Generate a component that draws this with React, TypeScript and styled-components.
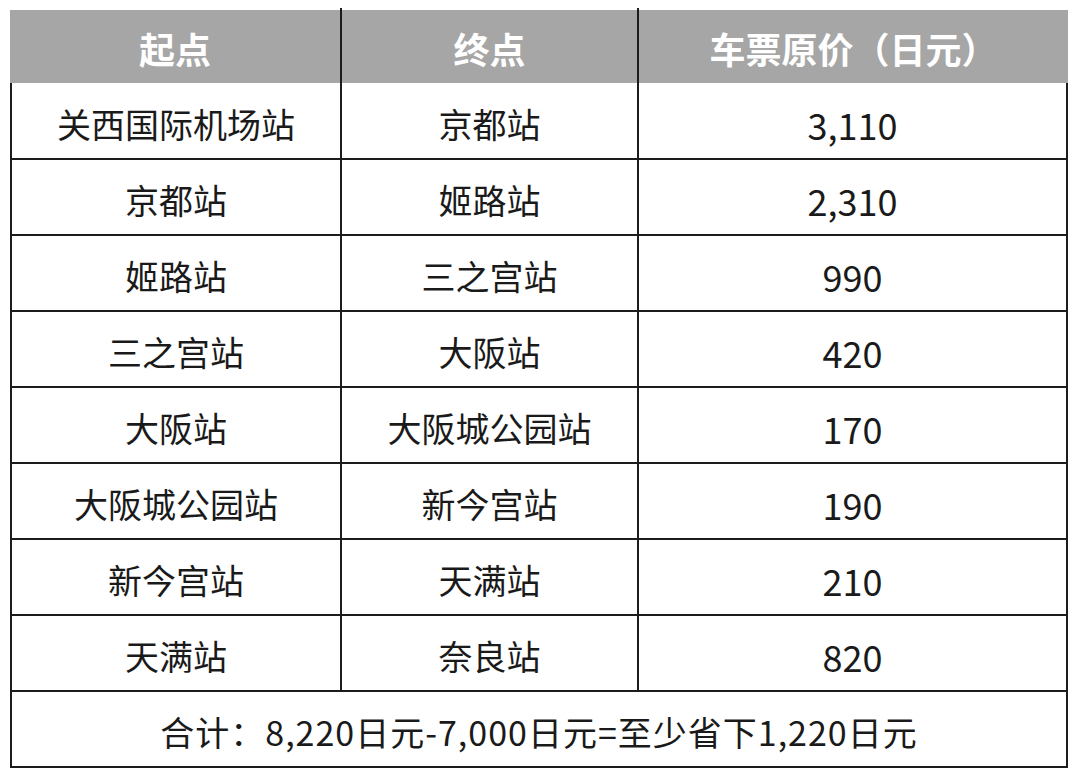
import React from "react";
import styled, { createGlobalStyle } from "styled-components";

const Global = createGlobalStyle`
  html, body { margin: 0; padding: 0; background: #ffffff; }
  body { font-family: "Noto Sans CJK SC", "Noto Sans", sans-serif; }
`;

const Page = styled.div`
  padding: 10px 0 0 10px;
`;

const Table = styled.div`
  width: 1058px;
  display: flex;
  flex-direction: column;
`;

const Header = styled.div`
  display: grid;
  grid-template-columns: 330px 297px 1fr;
  height: 73px;
  background: #a6a6a6;
`;

const HeaderCell = styled.div<{ $divider?: boolean }>`
  position: relative;
  display: flex;
  align-items: center;
  justify-content: center;
  color: #ffffff;
  font-size: 36px;
  font-weight: 700;
  line-height: 1;
  padding-top: 2px;
  box-sizing: border-box;
  border-left: ${(p) => (p.$divider ? "2px solid #1c1c1c" : "none")};
  ${(p) =>
    p.$divider
      ? `&::before {
    content: "";
    position: absolute;
    left: -2px;
    top: -2px;
    width: 2px;
    height: 2px;
    background: #1c1c1c;
  }`
      : ""}
`;

const Body = styled.div`
  border: 2px solid #1c1c1c;
  border-top: none;
`;

const Row = styled.div<{ $first?: boolean }>`
  display: grid;
  grid-template-columns: 328px 297px 1fr;
  height: ${(p) => (p.$first ? 77 : 76)}px;
  box-sizing: border-box;
  border-bottom: 2px solid #1c1c1c;
`;

const Cell = styled.div<{ $divider?: boolean; $num?: boolean }>`
  display: flex;
  align-items: center;
  justify-content: center;
  color: #1a1a1a;
  font-size: ${(p) => (p.$num ? 36 : 34)}px;
  line-height: 1;
  padding-top: 6px;
  box-sizing: border-box;
  border-left: ${(p) => (p.$divider ? "2px solid #1c1c1c" : "none")};
`;

const Footer = styled.div`
  height: 74px;
  display: flex;
  align-items: center;
  justify-content: center;
  color: #1a1a1a;
  font-size: 34px;
  letter-spacing: 1px;
  line-height: 1;
  padding-top: 6px;
  box-sizing: border-box;
`;

const rows: [string, string, string][] = [
  ["关西国际机场站", "京都站", "3,110"],
  ["京都站", "姬路站", "2,310"],
  ["姬路站", "三之宫站", "990"],
  ["三之宫站", "大阪站", "420"],
  ["大阪站", "大阪城公园站", "170"],
  ["大阪城公园站", "新今宫站", "190"],
  ["新今宫站", "天满站", "210"],
  ["天满站", "奈良站", "820"],
];

export default function App() {
  return (
    <Page>
      <Global />
      <Table>
        <Header>
          <HeaderCell>起点</HeaderCell>
          <HeaderCell $divider>终点</HeaderCell>
          <HeaderCell $divider>车票原价（日元）</HeaderCell>
        </Header>
        <Body>
          {rows.map((r, i) => (
            <Row key={i} $first={i === 0}>
              <Cell>{r[0]}</Cell>
              <Cell $divider>{r[1]}</Cell>
              <Cell $divider $num>
                {r[2]}
              </Cell>
            </Row>
          ))}
          <Footer>合计：8,220日元-7,000日元=至少省下1,220日元</Footer>
        </Body>
      </Table>
    </Page>
  );
}
